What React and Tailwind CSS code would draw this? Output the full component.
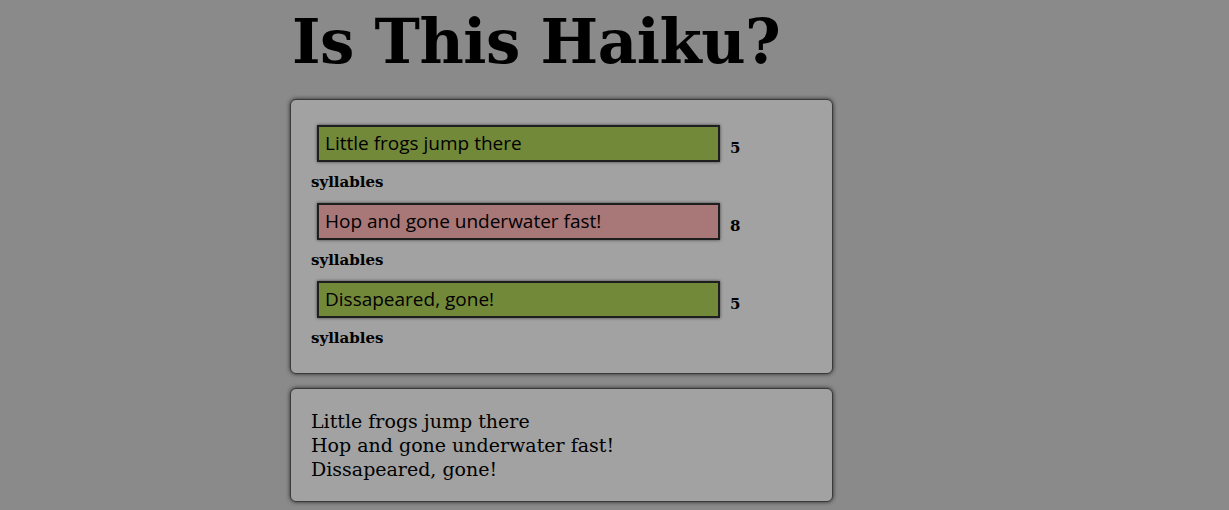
const lines = [
  { text: 'Little frogs jump there', count: 5, ok: true },
  { text: 'Hop and gone underwater fast!', count: 8, ok: false },
  { text: 'Dissapeared, gone!', count: 5, ok: true },
]

const serif = 'font-["DejaVu_Serif",Georgia,serif]'

export default function App() {
  return (
    <div className={`min-h-[510px] bg-[#8a8a8a] text-black ${serif}`}>
      <div className="ml-[290px] w-[543px]">
        <h1 className="pl-[2px] pt-[6px] text-[61px] font-bold leading-[72px] tracking-[-0.5px]">Is This Haiku?</h1>

        <div className="mt-[21px] rounded-md border border-[#3a3a3a] bg-[#a2a2a2] px-5 pt-[25px] pb-[26px] shadow-[0_0_4px_rgba(0,0,0,0.7)]">
          {lines.map((l, i) => (
            <div key={i} className={i > 0 ? 'mt-[12px]' : ''}>
              <div className="flex items-center">
                <div
                  className={`ml-[6px] flex h-[37px] w-[403px] items-center border-2 border-[#1e1e1e] px-[6px] font-['Open_Sans',sans-serif] text-[19px] shadow-[0_0_3px_rgba(0,0,0,0.6)] ${l.ok ? 'bg-[#73893a]' : 'bg-[#a87777]'}`}
                >
                  {l.text}
                </div>
                <span className="ml-[10px] mt-[9px] text-[15px] font-bold">{l.count}</span>
              </div>
              <div className="mt-[11px] text-[15px] font-bold leading-[18px]">syllables</div>
            </div>
          ))}
        </div>

        <div className="mt-[14px] rounded-md border border-[#3a3a3a] bg-[#a2a2a2] px-5 py-5 text-[19px] leading-[24px] shadow-[0_0_4px_rgba(0,0,0,0.7)]">
          {lines.map((l, i) => (
            <div key={i}>{l.text}</div>
          ))}
        </div>
      </div>
    </div>
  )
}
